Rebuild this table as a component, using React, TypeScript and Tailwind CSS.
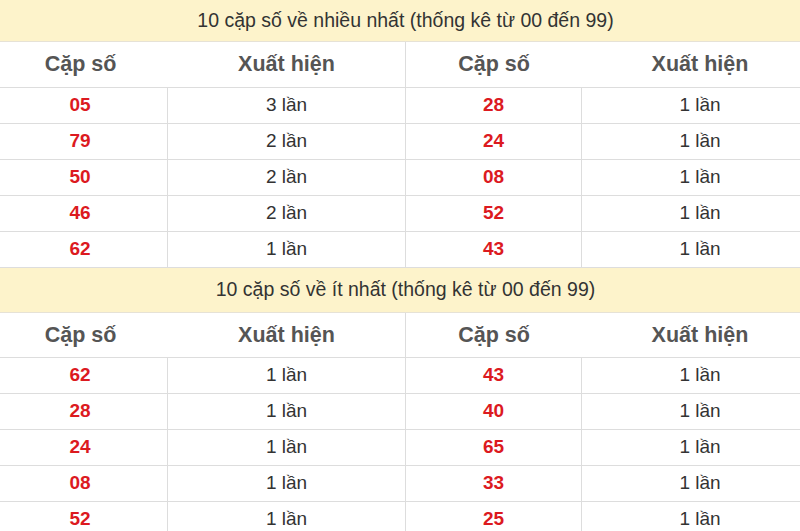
import React from "react";

const top = [
  ["05", "3 lần", "28", "1 lần"],
  ["79", "2 lần", "24", "1 lần"],
  ["50", "2 lần", "08", "1 lần"],
  ["46", "2 lần", "52", "1 lần"],
  ["62", "1 lần", "43", "1 lần"],
];
const bottom = [
  ["62", "1 lần", "43", "1 lần"],
  ["28", "1 lần", "40", "1 lần"],
  ["24", "1 lần", "65", "1 lần"],
  ["08", "1 lần", "33", "1 lần"],
  ["52", "1 lần", "25", "1 lần"],
];

function Section({ title, rows, first }: { title: string; rows: string[][]; first?: boolean }) {
  return (
    <div>
      <div
        className={`flex items-center justify-center bg-[#fdf3cb] border-b border-[#e6e2d6] text-[19.5px] text-[#333] ${first ? "h-[42px]" : "h-[45px]"}`}
      >
        {title}
      </div>
      <div className={`grid grid-cols-[175px_238px_176px_236px] border-b border-[#dddddd] text-[21.5px] font-bold text-[#555] ${first ? "h-[46px]" : "h-[45px]"}`}>
        <div className="flex items-center justify-center">Cặp số</div>
        <div className="flex items-center justify-center border-r border-[#dddddd]">Xuất hiện</div>
        <div className="flex items-center justify-center">Cặp số</div>
        <div className="flex items-center justify-center">Xuất hiện</div>
      </div>
      {rows.map((r, i) => (
        <div key={i} className="grid grid-cols-[175px_238px_176px_236px] h-[36px] border-b border-[#dddddd] text-[19px]">
          <div className="flex items-center justify-center border-r border-[#dddddd] font-bold text-[#dc1a1f]">{r[0]}</div>
          <div className="flex items-center justify-center border-r border-[#dddddd] text-[#333]">{r[1]}</div>
          <div className="flex items-center justify-center border-r border-[#dddddd] font-bold text-[#dc1a1f]">{r[2]}</div>
          <div className="flex items-center justify-center text-[#333]">{r[3]}</div>
        </div>
      ))}
    </div>
  );
}

export default function App() {
  return (
    <div className="w-[800px] h-[531px] overflow-hidden bg-white" style={{ fontFamily: '"Liberation Sans", Arial, sans-serif' }}>
      <div className="w-[825px] ml-[-7px]">
        <Section first title="10 cặp số về nhiều nhất (thống kê từ 00 đến 99)" rows={top} />
        <Section title="10 cặp số về ít nhất (thống kê từ 00 đến 99)" rows={bottom} />
      </div>
    </div>
  );
}
